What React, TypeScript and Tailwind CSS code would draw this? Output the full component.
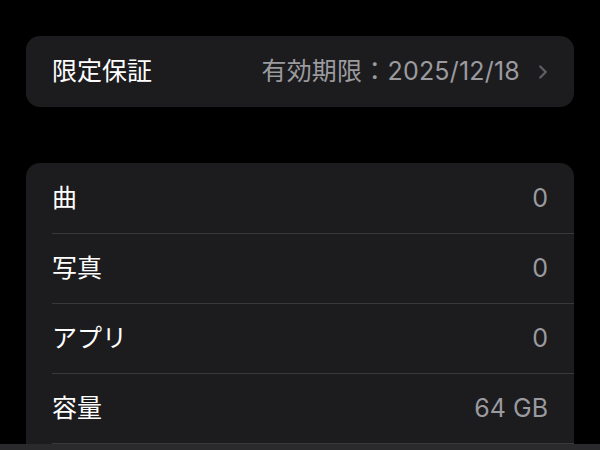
import { ChevronRight } from 'lucide-react';

type Row = { label: string; value: string };

const rows: Row[] = [
  { label: '曲', value: '0' },
  { label: '写真', value: '0' },
  { label: 'アプリ', value: '0' },
  { label: '容量', value: '64 GB' },
];

const font = { fontFamily: 'Inter, "Noto Sans CJK JP", sans-serif' };

export default function App() {
  return (
    <div
      className="relative h-[450px] w-[600px] overflow-hidden bg-black text-[25px] leading-none"
      style={font}
    >
      <div className="px-[26px] pt-[36px]">
        {/* Warranty card */}
        <div className="flex h-[71px] items-center justify-between rounded-[14px] bg-[#1c1c1e] pl-[26px] pr-[20px]">
          <span className="text-white">限定保証</span>
          <div className="flex items-center gap-[12px] text-[#9a9a9f]">
            <span className="tracking-[0.2px]">有効期限：2025/12/18</span>
            <ChevronRight className="h-[22px] w-[22px] text-[#5e5e63]" strokeWidth={2.6} />
          </div>
        </div>

        {/* Usage card */}
        <div className="mt-[56px] rounded-t-[14px] bg-[#1c1c1e] pl-[26px]">
          {rows.map((row, i) => (
            <div
              key={row.label}
              className={
                'flex h-[70px] items-center justify-between pr-[26px]' +
                (i > 0 ? ' border-t border-[#38383a]' : '')
              }
            >
              <span className="text-white">{row.label}</span>
              <span className="text-[#9a9a9f]">{row.value}</span>
            </div>
          ))}
          <div className="h-[10px] border-t border-[#38383a]" />
        </div>
      </div>

      {/* bottom toolbar edge */}
      <div className="absolute bottom-0 left-0 h-[6px] w-full bg-[#2a2a2c]" />
    </div>
  );
}
